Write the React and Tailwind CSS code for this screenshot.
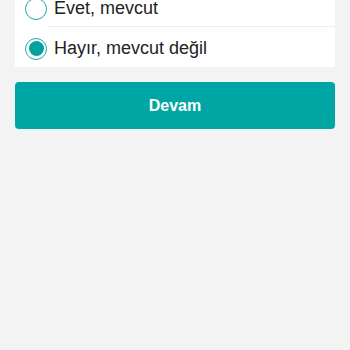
import React from "react";

const options = [
  { label: "Evet, mevcut", checked: false },
  { label: "Hayır, mevcut değil", checked: true },
];

const Radio = ({ checked }) => (
  <span className="flex h-[22px] w-[22px] shrink-0 items-center justify-center rounded-full border-[1.5px] border-[#1fa9a6] bg-white">
    {checked && <span className="h-[15px] w-[15px] rounded-full bg-[#00a3a0]" />}
  </span>
);

export default function App() {
  const [selected, setSelected] = React.useState(1);

  return (
    <div className="h-[350px] w-[350px] overflow-hidden bg-[#f3f3f3] px-[15px] font-['Helvetica','Liberation_Sans',sans-serif]">
      <div className="-mt-[13px] bg-white">
        {options.map((opt, idx) => (
          <div
            key={idx}
            className="flex h-[40px] cursor-pointer items-stretch"
            onClick={() => setSelected(idx)}
          >
            <div className="flex items-center pl-[10px] pt-[3px]">
              <Radio checked={selected === idx} />
            </div>
            <div
              className={
                "flex flex-1 items-center pl-[7px] pt-[3px] text-[18px] text-[#222] " +
                (idx === 0 ? "border-b border-[#eeeeee]" : "")
              }
            >
              {opt.label}
            </div>
          </div>
        ))}
      </div>
      <button className="mt-[15px] flex h-[47px] w-full items-center justify-center rounded-[4px] bg-[#00a6a4] text-[16px] font-bold text-white">
        Devam
      </button>
    </div>
  );
}
